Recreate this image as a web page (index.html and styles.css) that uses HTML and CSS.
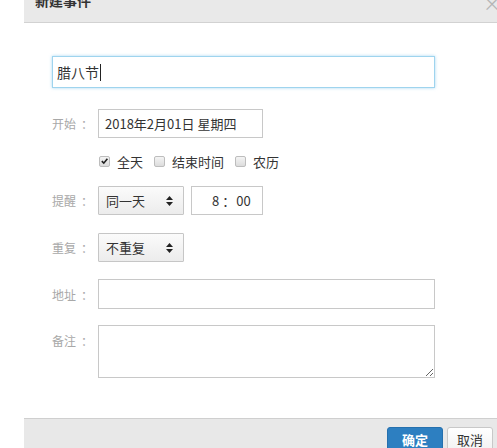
FILE: index.html
```html
<!DOCTYPE html>
<html lang="zh">
<head>
<meta charset="utf-8">
<link rel="stylesheet" href="styles.css">
</head>
<body>
<div class="dialog">
  <div class="header">
    <span class="title">新建事件</span>
    <span class="close">×</span>
  </div>
  <div class="content">
    <div class="name-input">腊八节<span class="caret"></span></div>
    <div class="row row-start">
      <span class="label">开始<span class="colon">：</span></span>
      <div class="box date">2018年2月01日 星期四</div>
    </div>
    <div class="row row-checks">
      <span class="check checked"><svg width="10" height="10" viewBox="0 0 10 10"><path d="M2 5.2 L4.2 7.4 L8.2 2.4" fill="none" stroke="#222" stroke-width="1.8"/></svg></span>
      <span class="ctext">全天</span>
      <span class="check"></span>
      <span class="ctext">结束时间</span>
      <span class="check"></span>
      <span class="ctext">农历</span>
    </div>
    <div class="row row-remind">
      <span class="label">提醒<span class="colon">：</span></span>
      <div class="select">同一天<svg class="arrows" width="7" height="10" viewBox="0 0 7 10"><path d="M3.5 0 L7 4 L0 4 Z M0 6 L7 6 L3.5 10 Z" fill="#222"/></svg></div>
      <div class="box time">8<span class="tcolon">：</span>00</div>
    </div>
    <div class="row row-repeat">
      <span class="label">重复<span class="colon">：</span></span>
      <div class="select">不重复<svg class="arrows" width="7" height="10" viewBox="0 0 7 10"><path d="M3.5 0 L7 4 L0 4 Z M0 6 L7 6 L3.5 10 Z" fill="#222"/></svg></div>
    </div>
    <div class="row row-addr">
      <span class="label">地址<span class="colon">：</span></span>
      <div class="box wide"></div>
    </div>
    <div class="row row-note">
      <span class="label">备注<span class="colon">：</span></span>
      <textarea class="note"></textarea>
    </div>
  </div>
  <div class="footer">
    <span class="btn primary">确定</span>
    <span class="btn">取消</span>
  </div>
</div>
</body>
</html>
```

FILE: styles.css
```css
html, body {
  margin: 0;
  padding: 0;
  background: #fff;
  overflow: hidden;
  height: 448px;
}
body {
  font-family: "Noto Sans CJK SC", "Microsoft YaHei", sans-serif;
  color: #333;
}
.dialog {
  margin-left: 24px;
  width: 480px;
  height: 448px;
  display: flex;
  flex-direction: column;
}
.header {
  height: 22px;
  flex: none;
  background: #e9e9e9;
  border-bottom: 1px solid #d2d2d2;
  display: flex;
  justify-content: space-between;
  align-items: flex-start;
  overflow: hidden;
  padding: 0 10px 0 11px;
}
.title {
  font-size: 14px;
  font-weight: bold;
  color: #333;
  line-height: 20px;
  margin-top: -10px;
}
.close {
  font-size: 18px;
  color: #b5b5b5;
  line-height: 18px;
  margin-top: -6px;
  margin-right: -7px;
}
.content {
  padding: 33px 0 0 28px;
  flex: 1;
}
.name-input {
  box-sizing: border-box;
  width: 383px;
  height: 32px;
  border: 1px solid #9fd4ee;
  box-shadow: 0 0 3px rgba(110, 190, 235, 0.6);
  font-size: 14px;
  line-height: 30px;
  padding-left: 4px;
  color: #333;
  display: flex;
  align-items: center;
}
.caret {
  display: inline-block;
  width: 1px;
  height: 17px;
  background: #222;
  margin-left: 1px;
}
.row {
  display: flex;
  align-items: center;
}
.label {
  width: 46px;
  font-size: 12px;
  color: #a8a8a8;
  flex: none;
  white-space: nowrap;
}
.colon {
  padding-left: 5px;
}
.tcolon {
  padding: 0 1px 0 3px;
}
.row-start { margin-top: 21px; }
.row-checks { margin-top: 15px; height: 16px; padding-left: 47px; }
.row-remind { margin-top: 17px; }
.row-repeat { margin-top: 18px; }
.row-addr { margin-top: 17px; }
.row-note { margin-top: 16px; align-items: flex-start; }
.row-note .label { margin-top: 7px; }
.box {
  box-sizing: border-box;
  height: 29px;
  border: 1px solid #c8c8c8;
  font-size: 13px;
  line-height: 27px;
  color: #333;
}
.date {
  width: 165px;
  padding-left: 6px;
}
.time {
  width: 72px;
  margin-left: 7px;
  padding-left: 20px;
  white-space: nowrap;
}
.wide {
  width: 337px;
  height: 30px;
}
.select {
  box-sizing: border-box;
  width: 86px;
  height: 29px;
  border: 1px solid #c6c6c6;
  background: linear-gradient(#fbfbfb, #ececec);
  font-size: 13px;
  color: #333;
  display: flex;
  align-items: center;
  justify-content: space-between;
  padding: 0 10px 0 7px;
  border-radius: 1px;
}
.note {
  box-sizing: border-box;
  width: 337px;
  height: 53px;
  border: 1px solid #c8c8c8;
  margin: 0;
  padding: 0;
  resize: both;
  outline: none;
}
.check {
  box-sizing: border-box;
  width: 11px;
  height: 11px;
  border: 1px solid #bdbdbd;
  border-radius: 2px;
  background: linear-gradient(#f4f4f4, #dcdcdc);
  display: inline-flex;
  align-items: center;
  justify-content: center;
  flex: none;
}
.check svg { display: block; }
.ctext {
  font-size: 13px;
  color: #333;
  margin-left: 7px;
  margin-right: 11px;
}
.footer {
  box-sizing: border-box;
  height: 30px;
  flex: none;
  border-top: 1px solid #cfcfcf;
  background: #e8e8e8;
  display: flex;
  justify-content: flex-end;
  align-items: flex-start;
  padding: 8px 0 0 0;
  overflow: hidden;
}
.btn {
  box-sizing: border-box;
  height: 28px;
  flex: none;
  font-size: 13px;
  line-height: 24px;
  border: 1px solid #c8c8c8;
  background: linear-gradient(#fff, #f0f0f0);
  color: #333;
  padding: 0 9px;
  margin-right: 11px;
  border-radius: 3px 3px 0 0;
}
.btn.primary {
  width: 56px;
  text-align: center;
  background: #2d7fc1;
  border-color: #2570ae;
  color: #fff;
  font-weight: bold;
  margin-right: 4px;
}
```
